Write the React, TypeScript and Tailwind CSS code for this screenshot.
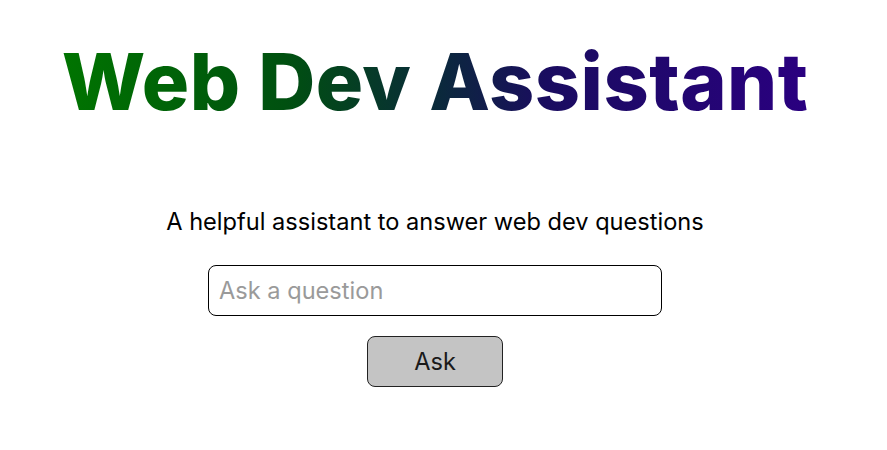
import React from "react";

export default function App() {
  return (
    <div className="w-[870px] h-[450px] bg-white flex flex-col items-center" style={{ fontFamily: "Inter, 'Liberation Sans', sans-serif" }}>
      <h1
        className="mt-[26px] text-[79px] leading-[110px] font-extrabold tracking-[0.45px] bg-clip-text text-transparent bg-[linear-gradient(to_right,#007400_0%,#005010_30%,#0a2a3a_50%,#1a0c60_65%,#2a0080_100%)]"
      >
        Web Dev Assistant
      </h1>
      <p className="mt-[71px] text-[23.6px] leading-[30px] text-black">A helpful assistant to answer web dev questions</p>
      <input
        className="mt-[28px] w-[454px] h-[51px] border border-black rounded-[8px] px-[10px] text-[23.6px] placeholder:text-[#9a9a9a] outline-none"
        placeholder="Ask a question"
      />
      <button className="mt-[20px] w-[136px] h-[51px] bg-[#c4c4c4] border border-[#222] rounded-[8px] text-[23.6px] text-[#1a1a1a]">
        Ask
      </button>
    </div>
  );
}
